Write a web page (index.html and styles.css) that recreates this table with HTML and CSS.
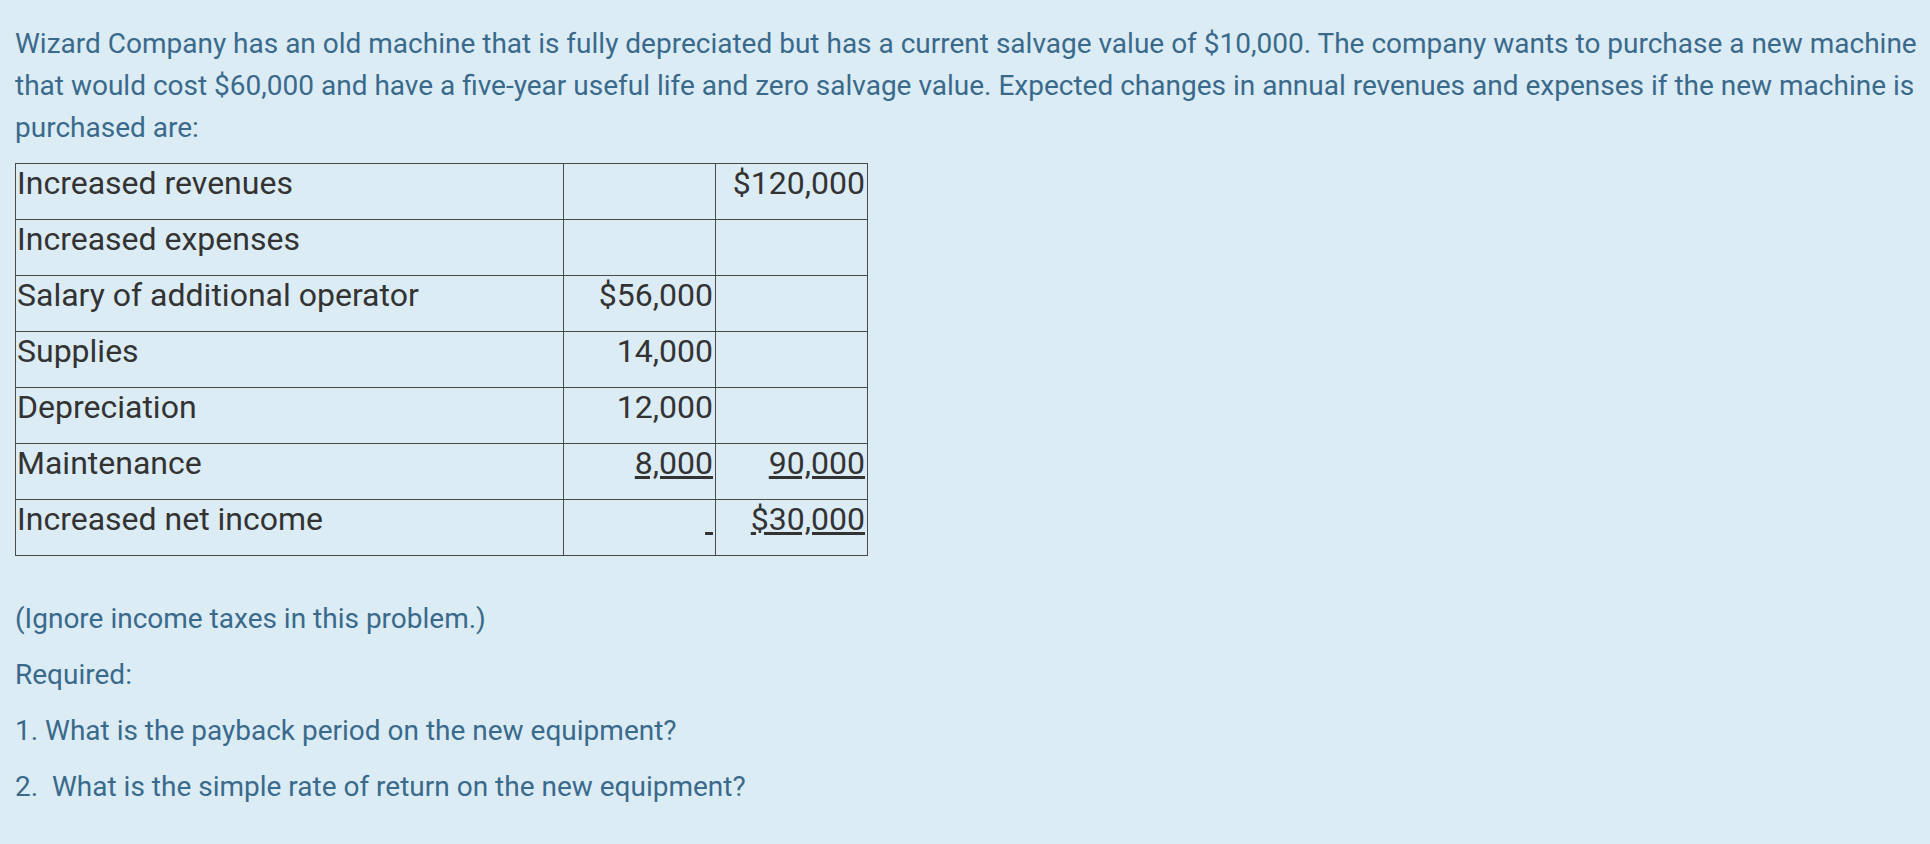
FILE: index.html
```html
<!DOCTYPE html>
<html lang="en">
<head>
<meta charset="utf-8">
<title>Wizard Company</title>
<link rel="stylesheet" href="styles.css">
</head>
<body>
<main class="question">
  <p class="text">Wizard Company has an old machine that is fully depreciated but has a current salvage value of $10,000. The company wants to purchase a new machine that would cost $60,000 and have a five-year useful life and zero salvage value. Expected changes in annual revenues and expenses if the new machine is purchased are:</p>
  <table class="data">
    <colgroup>
      <col class="c-label">
      <col class="c-num">
      <col class="c-num">
    </colgroup>
    <tbody>
      <tr><td>Increased revenues</td><td class="num"></td><td class="num">$120,000</td></tr>
      <tr><td>Increased expenses</td><td class="num"></td><td class="num"></td></tr>
      <tr><td>Salary of additional operator</td><td class="num">$56,000</td><td class="num"></td></tr>
      <tr><td>Supplies</td><td class="num">14,000</td><td class="num"></td></tr>
      <tr><td>Depreciation</td><td class="num">12,000</td><td class="num"></td></tr>
      <tr><td>Maintenance</td><td class="num"><u>8,000</u></td><td class="num"><u>90,000</u></td></tr>
      <tr><td>Increased net income</td><td class="num"><u>&nbsp;</u></td><td class="num"><u>$30,000</u></td></tr>
    </tbody>
  </table>
  <p class="text">(Ignore income taxes in this problem.)</p>
  <p class="text">Required:</p>
  <p class="text">1. What is the payback period on the new equipment?</p>
  <p class="text">2.&nbsp; What is the simple rate of return on the new equipment?</p>
</main>
</body>
</html>
```
FILE: styles.css
```css
html, body {
  margin: 0;
  padding: 0;
  background: #dcecf5;
}

.question {
  padding: 9px 4px 20px 15px;
  font-family: Roboto, "Liberation Sans", sans-serif;
  color: #3a6a8b;
}

.text {
  margin: 14px 0;
  font-size: 28px;
  line-height: 42px;
}

.data {
  border-collapse: collapse;
  table-layout: fixed;
  width: 853px;
  margin: 14px 0 42px;
  font-size: 32px;
  color: #333;
}

.c-label { width: 548px; }
.c-num { width: 152px; }

.data td {
  border: 1px solid #4a4a4a;
  height: 56px;
  padding: 0 2px 0 1px;
  vertical-align: top;
  line-height: normal;
  white-space: nowrap;
  box-sizing: border-box;
}

.data td.num {
  text-align: right;
}
```
